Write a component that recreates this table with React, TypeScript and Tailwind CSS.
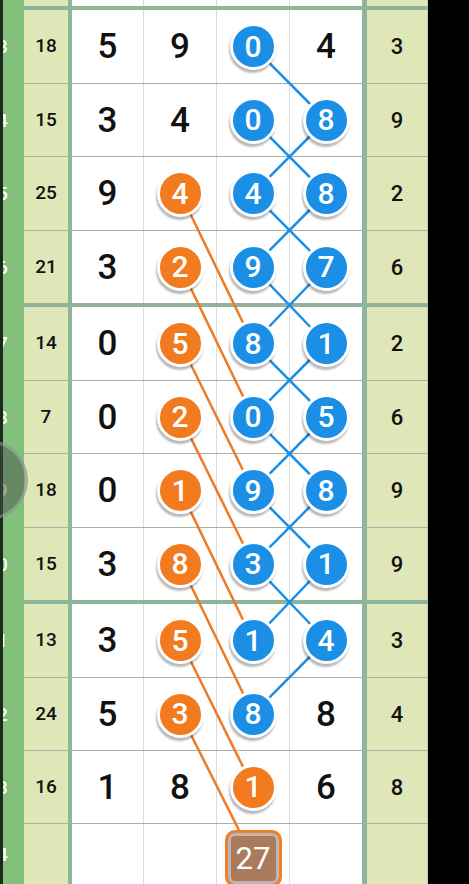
type Cell = string | { t: string; k: "b" | "o" } | { box: string };

const B = (t: string): Cell => ({ t, k: "b" });
const O = (t: string): Cell => ({ t, k: "o" });

const rows: { s: string; l: string; c: Cell[]; r: string; h: number; sep: number }[] = [
  { s: "3", l: "18", c: ["5", "9", B("0"), "4"], r: "3", h: 73, sep: 1 },
  { s: "4", l: "15", c: ["3", "4", B("0"), B("8")], r: "9", h: 72, sep: 1 },
  { s: "5", l: "25", c: ["9", O("4"), B("4"), B("8")], r: "2", h: 73, sep: 1 },
  { s: "6", l: "21", c: ["3", O("2"), B("9"), B("7")], r: "6", h: 72, sep: 4 },
  { s: "7", l: "14", c: ["0", O("5"), B("8"), B("1")], r: "2", h: 73, sep: 1 },
  { s: "8", l: "7", c: ["0", O("2"), B("0"), B("5")], r: "6", h: 72, sep: 1 },
  { s: "9", l: "18", c: ["0", O("1"), B("9"), B("8")], r: "9", h: 73, sep: 1 },
  { s: "0", l: "15", c: ["3", O("8"), B("3"), B("1")], r: "9", h: 72, sep: 4 },
  { s: "1", l: "13", c: ["3", O("5"), B("1"), B("4")], r: "3", h: 73, sep: 1 },
  { s: "2", l: "24", c: ["5", O("3"), B("8"), "8"], r: "4", h: 72, sep: 1 },
  { s: "3", l: "16", c: ["1", "8", O("1"), "6"], r: "8", h: 72, sep: 1 },
  { s: "4", l: "", c: ["", "", { box: "27" }, ""], r: "", h: 60, sep: 0 },
];

// row centres for the line overlay
const centers: number[] = [];
let yy = 10;
rows.forEach((r) => {
  centers.push(yy + r.h / 2);
  yy += r.h + r.sep;
});
centers[11] = 858;

const X2 = 180.5;
const X3 = 253;
const X4 = 326;

const blue: [number, number, number, number][] = [[X3, centers[0], X4, centers[1]]];
for (let k = 1; k <= 7; k++) {
  blue.push([X3, centers[k], X4, centers[k + 1]]);
  blue.push([X4, centers[k], X3, centers[k + 1]]);
}
blue.push([X4, centers[8], X3, centers[9]]);

const orange: [number, number, number, number][] = [];
for (let k = 2; k <= 9; k++) orange.push([X2, centers[k], X3, centers[k + 2]]);

const font = { fontFamily: "Roboto, 'Liberation Sans', sans-serif" };

function Ball({ t, k }: { t: string; k: "b" | "o" }) {
  return (
    <div
      className={`relative z-10 w-[47px] h-[47px] rounded-full border-[3px] border-white flex items-center justify-center text-white text-[30px] font-medium leading-none shadow-[-1px_3px_2px_rgba(0,0,0,0.28)] ${
        k === "b" ? "bg-[#1b8fe6]" : "bg-[#f27a1f]"
      }`}
    >
      {t}
    </div>
  );
}

function CellView({ c }: { c: Cell }) {
  if (typeof c === "string")
    return <span className="text-[35px] font-medium text-[#111] leading-none">{c}</span>;
  if ("box" in c)
    return (
      <div className="relative z-10 mt-[6px] w-[57px] h-[57px] rounded-[10px] border-[3px] border-[#f07f2a] bg-[#a97b5c] shadow-[inset_0_0_0_3px_rgba(205,205,215,0.7)] flex items-center justify-center text-white text-[31px] leading-none">
        {c.box}
      </div>
    );
  return <Ball t={c.t} k={c.k} />;
}

function Strip({ h, s }: { h: number; s?: string }) {
  return (
    <div className="w-[24px] shrink-0 bg-[#1a2a1a] pl-[3px]" style={{ height: h }}>
      <div className="w-[21px] h-full bg-[#82c07c] overflow-hidden flex items-center">
        {s && <span className="-ml-[6px] text-white text-[19px] font-medium leading-none">{s}</span>}
      </div>
    </div>
  );
}

function Sep({ h }: { h: number }) {
  return (
    <div className="flex">
      <Strip h={h} />
      <div
        className={`w-[404px] ${h > 1 ? "bg-[#8fb49b]" : "bg-[#a9b0a6]"}`}
        style={{ height: h }}
      />
    </div>
  );
}

const widths = ["w-[72px]", "w-[73px]", "w-[73px]", "w-[72px]"];

export default function App() {
  return (
    <div className="relative w-[469px] h-[884px] overflow-hidden bg-black" style={font}>
      {/* partial top row */}
      <div className="flex h-[6px]">
        <Strip h={6} />
        <div className="w-[44px] bg-[#dfe6b8]" />
        <div className="w-[4px] bg-[#8fb49b]" />
        <div className="w-[72px] bg-white border-r border-[#dcdcdc]" />
        <div className="w-[73px] bg-white border-r border-[#dcdcdc]" />
        <div className="w-[73px] bg-white border-r border-[#dcdcdc]" />
        <div className="w-[72px] bg-white" />
        <div className="w-[5px] bg-[#8fb49b]" />
        <div className="w-[60px] bg-[#dfe6b8]" />
        <div className="w-[1px] bg-[#c9cfae]" />
      </div>
      <Sep h={4} />

      {rows.map((r, i) => (
        <div key={i}>
          <div className="flex" style={{ height: r.h }}>
            <Strip h={r.h} s={r.s} />
            <div className="w-[44px] bg-[#dfe6b8] flex items-center justify-center text-[19px] font-medium text-[#111]">
              {r.l}
            </div>
            <div className="w-[4px] bg-[#8fb49b]" />
            {r.c.map((c, j) => (
              <div
                key={j}
                className={`${widths[j]} bg-white flex justify-center ${
                  typeof c === "object" && "box" in c ? "items-start" : "items-center"
                } ${j < 3 ? "border-r border-[#dcdcdc]" : ""}`}
              >
                <CellView c={c} />
              </div>
            ))}
            <div className="w-[5px] bg-[#8fb49b]" />
            <div className="w-[60px] bg-[#dfe6b8] flex items-center justify-center text-[22px] font-medium text-[#111]">
              {r.r}
            </div>
            <div className="w-[1px] bg-[#c9cfae]" />
          </div>
          {r.sep > 0 && <Sep h={r.sep} />}
        </div>
      ))}

      {/* connecting lines */}
      <svg className="absolute inset-0" width={469} height={884}>
        {blue.map(([a, b, c, d], i) => (
          <line key={"b" + i} x1={a} y1={b} x2={c} y2={d} stroke="#1b8fe6" strokeWidth={2.5} />
        ))}
        {orange.map(([a, b, c, d], i) => (
          <line key={"o" + i} x1={a} y1={b} x2={c} y2={d} stroke="#f07a22" strokeWidth={2.5} />
        ))}
      </svg>

      {/* floating button at the left edge */}
      <div className="absolute left-[-52px] top-[440px] w-[80px] h-[80px] rounded-full bg-[rgba(70,80,70,0.5)] border-[3px] border-[rgba(200,210,200,0.35)]" />
    </div>
  );
}
